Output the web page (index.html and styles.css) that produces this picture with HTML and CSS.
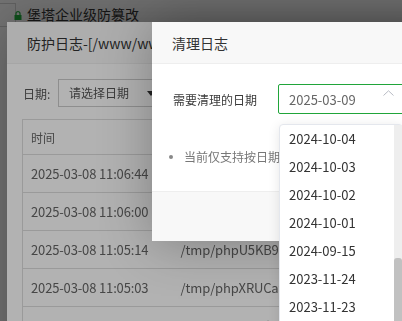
FILE: index.html
```html
<!DOCTYPE html>
<html lang="zh-CN">
<head>
  <meta charset="UTF-8">
  <meta name="viewport" content="width=device-width, initial-scale=1.0">
  <title>清理日志</title>
  <link rel="stylesheet" href="styles.css">
</head>
<body>
  <div class="app">
    <div class="app-head">
      <span class="win-icon"></span>
      <svg class="lock" width="8" height="9" viewBox="0 0 8 9"><path d="M2 4V2.6a2 2 0 0 1 4 0V4" fill="none" stroke="#20a53a" stroke-width="1.2"/><rect x="0.5" y="4" width="7" height="5" fill="#20a53a"/></svg>
      <span>堡塔企业级防篡改</span>
    </div>
  </div>

  <div class="shade"></div>
  <div class="layer log-layer">
    <div class="layer-title">防护日志-[/www/wwwroot/site]</div>
    <div class="log-body">
      <div class="filter">
        <span class="filter-label">日期:</span>
        <div class="filter-select">请选择日期<i class="caret"></i></div>
      </div>
      <table class="log-table">
        <thead>
          <tr><th class="col-time">时间</th><th>文件</th></tr>
        </thead>
        <tbody>
          <tr><td>2025-03-08 11:06:44</td><td>/tmp/phpA7cL2m</td></tr>
          <tr><td>2025-03-08 11:06:00</td><td>/tmp/phpQ0v8Tx</td></tr>
          <tr><td>2025-03-08 11:05:14</td><td>/tmp/phpU5KB9s</td></tr>
          <tr><td>2025-03-08 11:05:03</td><td>/tmp/phpXRUCaf</td></tr>
          <tr><td>2025-03-08 11:04:52</td><td>/tmp/phpc228k1</td></tr>
        </tbody>
      </table>
    </div>
  </div>

  <div class="shade"></div>
  <div class="layer clean-layer">
    <div class="layer-title">清理日志</div>
    <div class="clean-body">
      <div class="form-row">
        <span class="form-label">需要清理的日期</span>
        <div class="date-select">
          <span>2025-03-09</span>
          <svg class="arrow-up" width="11" height="6" viewBox="0 0 11 6"><path d="M0.5 5.5L5.5 0.8L10.5 5.5" fill="none" stroke="#b8bcc4" stroke-width="1"/></svg>
        </div>
      </div>
      <ul class="tips">
        <li>当前仅支持按日期清理，清理后无法恢复</li>
      </ul>
    </div>
    <div class="clean-foot"></div>
  </div>

  <div class="date-menu">
    <ul class="date-list">
      <li>2024-10-04</li>
      <li>2024-10-03</li>
      <li>2024-10-02</li>
      <li>2024-10-01</li>
      <li>2024-09-15</li>
      <li>2023-11-24</li>
      <li>2023-11-23</li>
    </ul>
    <div class="scroll-track"><div class="scroll-thumb"></div></div>
  </div>
</body>
</html>
```

FILE: styles.css
```css
* {
  box-sizing: border-box;
}

html,
body {
  margin: 0;
  height: 100%;
  overflow: hidden;
}

body {
  position: relative;
  font-family: "Noto Sans CJK SC", "Noto Sans", sans-serif;
  font-size: 12px;
  color: #333;
  background: #ececec;
}

/* page behind the dialogs */
.app-head {
  height: 28px;
  display: flex;
  align-items: center;
  font-size: 14px;
  color: #333;
  background: #ececec;
}

.win-icon {
  align-self: flex-start;
  width: 17px;
  height: 24px;
  margin: 3px 0 0 -1px;
  border: 1px solid #c8c8c8;
}

.lock {
  margin: 3px 5px 0 -2px;
}

.shade {
  position: fixed;
  inset: 0;
  background: rgba(0, 0, 0, 0.3);
}

.layer {
  position: absolute;
  background: #fff;
  box-shadow: 1px 1px 50px rgba(0, 0, 0, 0.3);
  display: flex;
  flex-direction: column;
}

.layer-title {
  height: 42px;
  line-height: 42px;
  padding: 0 20px;
  font-size: 14px;
  color: #333;
  background: #f8f8f8;
  border-bottom: 1px solid #eee;
  white-space: nowrap;
  overflow: hidden;
}

/* log dialog */
.log-layer {
  left: 7px;
  top: 22px;
  width: 520px;
  height: 360px;
}

.log-body {
  padding: 15px;
}

.filter {
  display: flex;
  align-items: center;
}

.filter-label {
  width: 36px;
  padding-left: 1px;
  color: #555;
}

.filter-select {
  position: relative;
  width: 110px;
  height: 28px;
  line-height: 26px;
  padding-left: 10px;
  border: 1px solid #ccc;
  color: #555;
}

.caret {
  position: absolute;
  right: 12px;
  top: 11px;
  border-left: 4px solid transparent;
  border-right: 4px solid transparent;
  border-top: 5px solid #333;
}

.log-table {
  margin-top: 12px;
  width: 480px;
  border-collapse: collapse;
  border: 1px solid #ddd;
}

.log-table th {
  height: 35px;
  padding: 0 8px;
  text-align: left;
  font-weight: normal;
  color: #666;
  border-bottom: 1px solid #ddd;
}

.log-table .col-time {
  width: 150px;
}

.log-table td {
  height: 38px;
  padding: 0 8px;
  font-size: 13px;
  letter-spacing: -0.15px;
  color: #666;
  border-bottom: 1px solid #ddd;
  white-space: nowrap;
}

/* clean dialog */
.clean-layer {
  left: 152px;
  top: 22px;
  width: 300px;
  height: 219px;
}

.clean-body {
  flex: 1;
  padding: 20px 0 0 21px;
}

.form-row {
  display: flex;
  align-items: center;
}

.form-label {
  width: 105px;
  color: #3a3a3a;
}

.date-select {
  display: flex;
  width: 130px;
  height: 30px;
  padding: 0 13px 0 10px;
  align-items: center;
  justify-content: space-between;
  border: 1px solid #20a53a;
  border-radius: 2px;
  font-size: 13px;
  color: #666;
}

.arrow-up {
  align-self: flex-start;
  margin-top: 5px;
}

.tips {
  list-style: none;
  margin: 33px 0 0 -4px;
  padding: 0;
  color: #777;
  white-space: nowrap;
}

.tips li {
  display: flex;
  align-items: center;
  line-height: 20px;
}

.tips li::before {
  content: "";
  width: 4px;
  height: 4px;
  margin-right: 11px;
  border-radius: 50%;
  background: #888;
}

.clean-foot {
  height: 50px;
  background: #f8f8f8;
  border-top: 1px solid #eee;
}

/* date dropdown */
.date-menu {
  position: absolute;
  left: 279px;
  top: 124px;
  width: 124px;
  height: 210px;
  display: flex;
  background: #fff;
  border: 1px solid #e4e7ed;
  border-radius: 4px;
  box-shadow: 0 2px 12px rgba(0, 0, 0, 0.1);
}

.date-list {
  flex: 1;
  list-style: none;
  margin: 0;
  padding: 0;
}

.date-list li {
  height: 28px;
  line-height: 27px;
  padding-left: 9px;
  font-size: 13px;
  color: #333;
}

.scroll-track {
  width: 8px;
  background: #eee;
}

.scroll-thumb {
  margin-top: 133px;
  height: 80px;
  background: #c1c1c1;
  border-radius: 3px 3px 0 0;
}
```
